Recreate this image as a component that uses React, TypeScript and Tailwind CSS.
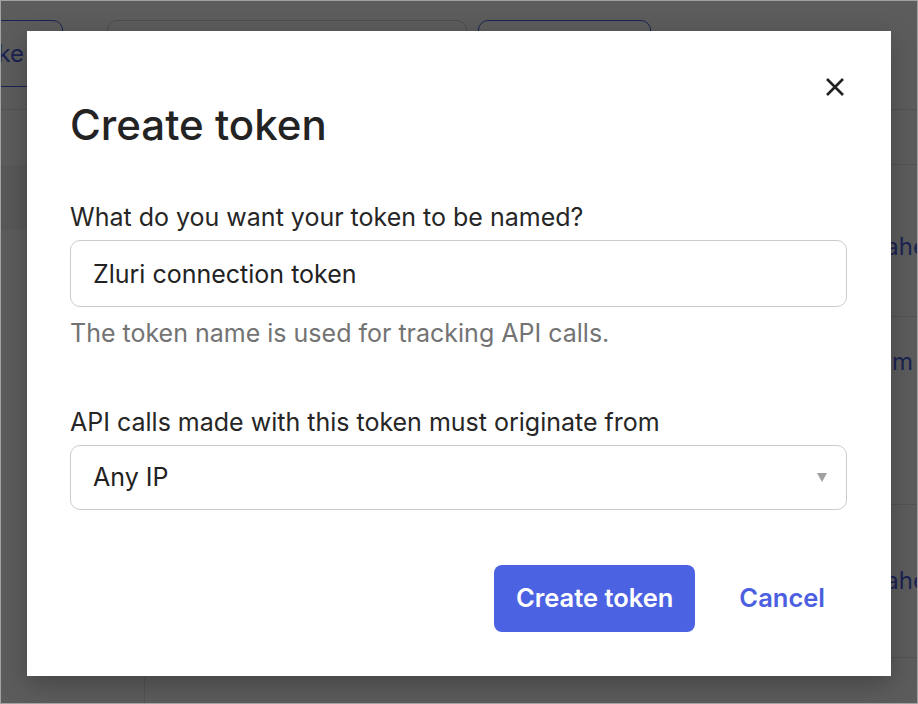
import React, { useState } from "react";

const rows = [
  { cls: "h-[55px] items-center", text: "", shift: "" },
  { cls: "h-[152px] items-center pt-[12px]", text: "ahe", shift: "-mr-[10px]" },
  { cls: "h-[188px] items-start pt-[27px]", text: "m", shift: "mr-[4px]" },
  { cls: "h-[153px] items-center", text: "ahe", shift: "-mr-[10px]" },
];

const App: React.FC = () => {
  const [name, setName] = useState("Zluri connection token");

  return (
    <div className="relative w-[918px] h-[704px] overflow-hidden border border-[#a2a2a2] bg-white font-['Inter',sans-serif]">
      {/* page behind the dialog */}
      <div className="flex flex-col h-full">
        <div className="flex items-start gap-[11px] pt-[19px] h-[109px] border-b border-[#e6e6e6]">
          <div className="w-[64px] h-[67px] -ml-[2px] border border-[#4b5fe0] rounded-r-[10px] flex items-center justify-end pr-[38px] text-[24px] text-[#4b5fe0]">
            ke
          </div>
          <div className="w-[360px] h-[67px] ml-[33px] border border-[#d4d4d4] rounded-[10px]" />
          <div className="w-[173px] h-[67px] border border-[#4b5fe0] rounded-[10px]" />
        </div>
        <div className="flex flex-1">
          <div className="w-[144px] border-r border-[#e6e6e6] flex flex-col">
            <div className="h-[55px]" />
            <div className="h-[65px] bg-[#f3f3f3]" />
          </div>
          <div className="flex-1 flex flex-col">
            {rows.map((r, i) => (
              <div key={i} className={`${r.cls} border-b border-[#e6e6e6] flex justify-end text-[24px] text-[#4b5fe0]`}>
                <span className={r.shift}>{r.text}</span>
              </div>
            ))}
          </div>
        </div>
      </div>

      {/* overlay */}
      <div className="absolute inset-0 bg-black/[0.64] flex justify-center pt-[30px]">
        <div className="relative w-[864px] h-[645px] bg-white shadow-[0_8px_24px_rgba(0,0,0,0.25)] pl-[43px] pr-[44px] pt-[70px] flex flex-col">
          <button className="absolute top-[46px] right-[46px] w-[20px] h-[20px] flex items-center justify-center">
            <svg width="20" height="20" viewBox="0 0 20 20" fill="none">
              <path d="M2 2 L18 18 M18 2 L2 18" stroke="#222222" strokeWidth="2.6" strokeLinecap="butt" />
            </svg>
          </button>

          <h1 className="text-[42px] leading-[48px] font-medium text-[#232323]">Create token</h1>

          <label className="mt-[52px] text-[25px] leading-[32px] text-[#262626]">
            What do you want your token to be named?
          </label>
          <input
            value={name}
            onChange={(e) => setName(e.target.value)}
            className="mt-[7px] h-[67px] w-full border border-[#cccccc] rounded-[10px] px-[22px] text-[25px] text-[#222222] outline-none"
          />
          <p className="mt-[10px] text-[25px] leading-[32px] text-[#737373]">
            The token name is used for tracking API calls.
          </p>

          <label className="mt-[57px] text-[25px] leading-[32px] text-[#262626]">
            API calls made with this token must originate from
          </label>
          <div className="mt-[7px] h-[65px] w-full border border-[#cccccc] rounded-[10px] pl-[22px] pr-[19px] flex items-center justify-between text-[25px] text-[#222222]">
            <span>Any IP</span>
            <svg width="10" height="9" viewBox="0 0 10 9">
              <polygon points="0,0 10,0 5,9" fill="#a0a0a0" />
            </svg>
          </div>

          <div className="mt-[55px] flex justify-end gap-[22px]">
            <button className="h-[67px] px-[22px] rounded-[8px] bg-[#4b63e2] text-white text-[25.5px] font-semibold">
              Create token
            </button>
            <button className="h-[67px] px-[22px] text-[#4b5fe0] text-[25.5px] font-semibold">Cancel</button>
          </div>
        </div>
      </div>
    </div>
  );
};

export default App;
